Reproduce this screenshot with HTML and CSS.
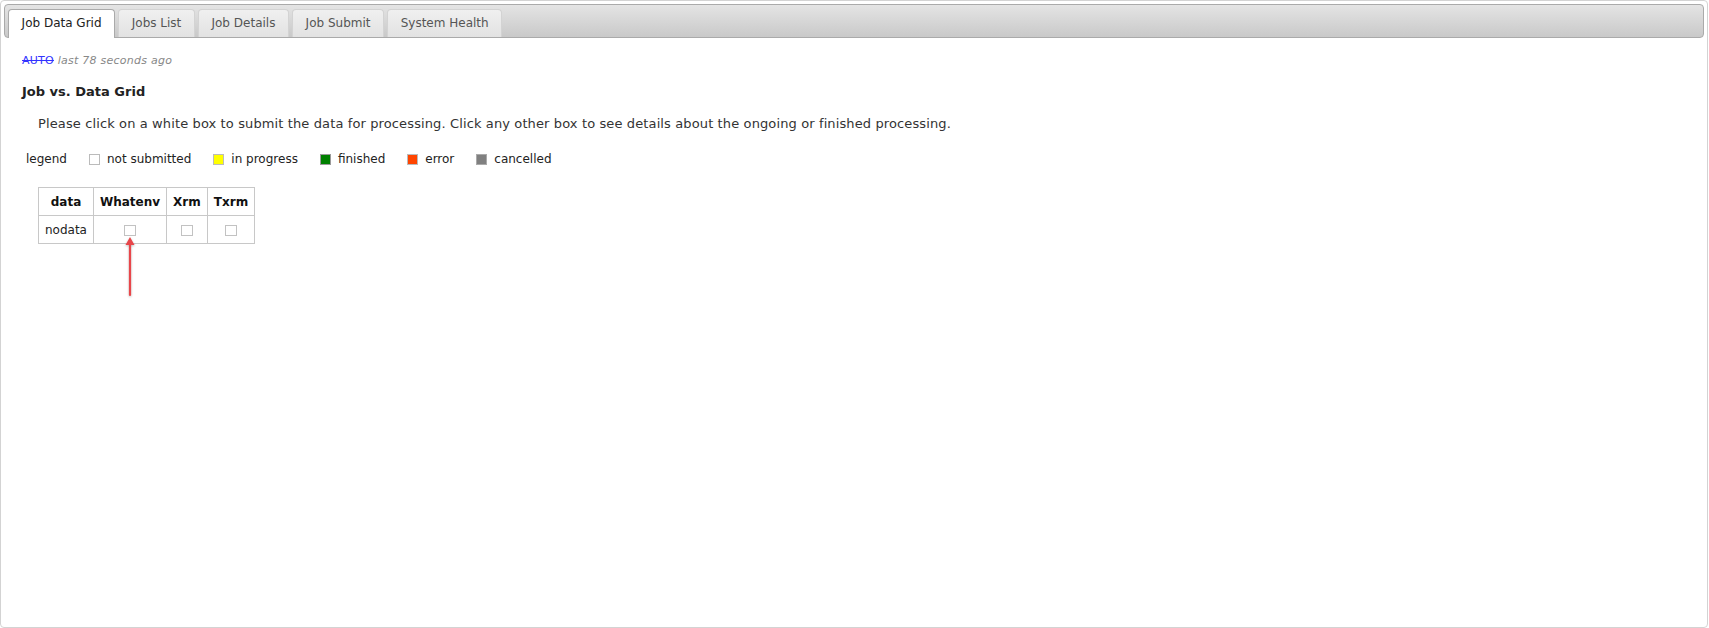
FILE: index.html
```html
<!DOCTYPE html>
<html>
<head>
<meta charset="utf-8">
<link rel="stylesheet" href="styles.css">
</head>
<body>
<div class="tabs">
  <ul class="tab-nav">
    <li class="tab active"><a>Job Data Grid</a></li>
    <li class="tab"><a>Jobs List</a></li>
    <li class="tab"><a>Job Details</a></li>
    <li class="tab"><a>Job Submit</a></li>
    <li class="tab"><a>System Health</a></li>
  </ul>
  <div class="panel">
    <div class="status"><a class="auto">AUTO</a> <span class="ago">last 78 seconds ago</span></div>
    <h3 class="title">Job vs. Data Grid</h3>
    <p class="intro">Please click on a white box to submit the data for processing. Click any other box to see details about the ongoing or finished processing.</p>
    <div class="legend">
      <span class="legend-label">legend</span>
      <span class="legend-item"><span class="swatch s-none"></span>not submitted</span>
      <span class="legend-item"><span class="swatch s-progress"></span>in progress</span>
      <span class="legend-item"><span class="swatch s-finished"></span>finished</span>
      <span class="legend-item"><span class="swatch s-error"></span>error</span>
      <span class="legend-item"><span class="swatch s-cancelled"></span>cancelled</span>
    </div>
    <div class="grid-wrap">
      <table class="grid">
        <thead>
          <tr><th>data</th><th>Whatenv</th><th>Xrm</th><th>Txrm</th></tr>
        </thead>
        <tbody>
          <tr><td>nodata</td><td><span class="cellbox"></span></td><td><span class="cellbox"></span></td><td><span class="cellbox"></span></td></tr>
        </tbody>
      </table>
      <svg class="arrow" width="20" height="64" viewBox="0 0 20 64">
        <line x1="10" y1="6" x2="10" y2="60" stroke="#e8464a" stroke-width="2.2" stroke-linecap="round"/>
        <path d="M5.5 10 L10 2 L14.5 10 Z" fill="#e8464a"/>
      </svg>
    </div>
  </div>
</div>
</body>
</html>
```

FILE: styles.css
```css
html, body {
  margin: 0;
  padding: 0;
  background: #fff;
}
body {
  font-family: "DejaVu Sans", Verdana, sans-serif;
  font-size: 12px;
  color: #222;
}
.tabs {
  box-sizing: border-box;
  width: 1708px;
  height: 628px;
  border: 1px solid #d3d3d3;
  border-radius: 4px;
  padding: 3px;
  background: #fff;
}
.tab-nav {
  list-style: none;
  margin: 0;
  padding: 4px 3px 0 3px;
  height: 28px;
  border: 1px solid #aaa;
  border-radius: 4px;
  background: linear-gradient(#e4e4e4, #c9c9c9);
  display: flex;
  gap: 3px;
}
.tab {
  height: 27px;
  border: 1px solid #d3d3d3;
  border-bottom: 0;
  border-radius: 4px 4px 0 0;
  background: linear-gradient(#f0f0f0, #e2e2e2);
}
.tab a {
  display: block;
  padding: 6px 12.6px;
  line-height: 15px;
  color: #555;
  white-space: nowrap;
}
.tab.active {
  background: #fff;
  border-color: #aaa;
  height: 28px;
  position: relative;
  z-index: 1;
}
.tab.active a {
  color: #212121;
}
.panel {
  padding: 12px 18px;
}
.status {
  font-size: 11px;
  letter-spacing: 0.25px;
  line-height: 16px;
  margin-top: 3px;
}
.auto {
  color: #3333ff;
  text-decoration: line-through;
}
.ago {
  color: #888;
  font-style: italic;
}
.title {
  margin: 15px 0 0 0;
  font-size: 13px;
  line-height: 16px;
  font-weight: bold;
  color: #222;
}
.intro {
  margin: 16px 0 0 0;
  padding-left: 16px;
  font-size: 13px;
  letter-spacing: 0.12px;
  line-height: 16px;
  color: #333;
}
.legend {
  display: flex;
  align-items: center;
  margin-top: 19px;
  padding-left: 4px;
  line-height: 16px;
  color: #222;
  gap: 22px;
}
.legend-item {
  display: flex;
  align-items: center;
}
.swatch {
  display: inline-block;
  box-sizing: border-box;
  width: 11px;
  height: 11px;
  border: 1px solid #aaa;
  margin-right: 7px;
}
.s-none { background: #fff; border-color: #bbb; }
.s-progress { background: #ffff00; border-color: #bbb; }
.s-finished { background: #008000; border-color: #9a9a9a; }
.s-error { background: #ff4500; border-color: #bbb; }
.s-cancelled { background: #808080; border-color: #aaa; }
.grid-wrap {
  position: relative;
  margin-top: 20px;
  padding-left: 16px;
}
.grid {
  border-collapse: collapse;
}
.grid th, .grid td {
  border: 1px solid #c8c8c8;
  height: 28px;
  padding: 0 6px;
  text-align: center;
  line-height: 16px;
  box-sizing: border-box;
}
.grid th {
  font-weight: bold;
  color: #111;
}
.cellbox {
  display: inline-block;
  box-sizing: border-box;
  width: 12px;
  height: 11px;
  border: 1px solid #c2c2c2;
  vertical-align: middle;
}
.arrow {
  position: absolute;
  left: 98px;
  top: 48px;
  filter: drop-shadow(0 1px 1px rgba(0,0,0,0.25));
}
```
